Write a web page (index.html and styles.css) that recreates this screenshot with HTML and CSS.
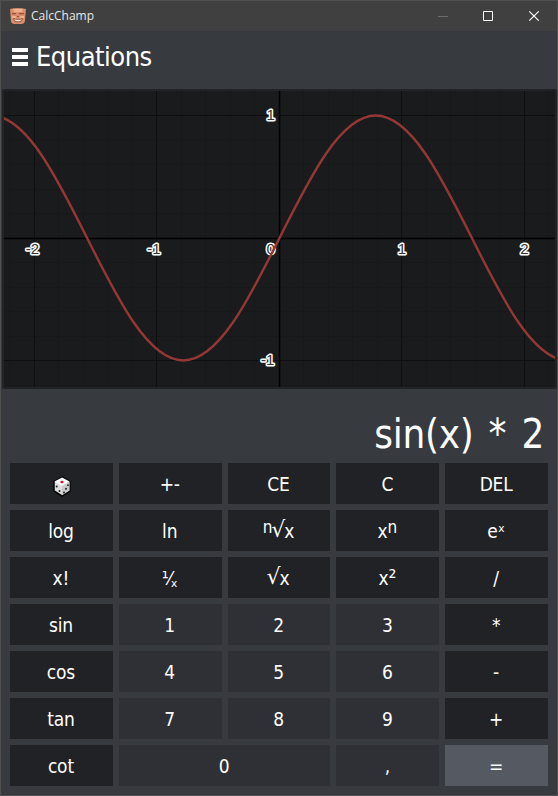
FILE: index.html
```html
<!DOCTYPE html>
<html lang="en">
<head>
<meta charset="utf-8">
<title>CalcChamp</title>
<link rel="stylesheet" href="styles.css">
</head>
<body>
<div class="window">
  <header class="titlebar">
    <svg class="app-icon" width="16" height="16" viewBox="0 0 16 16">
      <path fill="#d98d6c" d="M0 1Q8-1 16 1L15 12Q15 16 11 16H5Q1 16 1 13z"/>
      <path fill="#efb08d" d="M3 1h10l-1 3H4zM2 8h4v2H2zm8 0h4v2h-4z"/>
      <path fill="#94513d" d="M2 5h4v1.300H2zm7 0h5v1.300H9zM7 8h2v1H7zM3 10q5 2 10 0-1 4.500-5 4.500t-5-4.500z"/>
      <path fill="#fbe5d6" d="M4 11.200q4 1 8 0-1 2.300-4 2.300t-4-2.300z"/>
    </svg>
    <span class="app-name">CalcChamp</span>
    <svg class="controls" width="104" height="12" viewBox="0 0 104 12">
      <path d="M0 6.500h10" stroke="#6c6c6c"/>
      <path d="M45.500 1.500h9v9h-9z" stroke="#fff" fill="none"/>
      <path d="M91.300 1.300l9.400 9.400m0-9.400l-9.400 9.400" stroke="#fff" stroke-width="1.200"/>
    </svg>
  </header>
  <div class="heading">
    <div class="menu"><i></i><i></i><i></i></div>
    <h1>Equations</h1>
  </div>
  <div class="graph">
    <svg class="plot" width="551" height="296" viewBox="4 91 551 296">
      <path class="minor" d="M9.500 91v296M58.500 91v296M83.500 91v296M107.500 91v296M132.500 91v296M181.500 91v296M205.500 91v296M230.500 91v296M254.500 91v296M303.500 91v296M328.500 91v296M352.500 91v296M377.500 91v296M426.500 91v296M450.500 91v296M475.500 91v296M499.500 91v296M548.500 91v296M4 140.500h551M4 164.500h551M4 189.500h551M4 213.500h551M4 262.500h551M4 287.500h551M4 311.500h551M4 336.500h551M4 385.500h551"/>
      <path class="major" d="M34.500 91v296M156.500 91v296M401.500 91v296M524.500 91v296M4 115.500h551M4 360.500h551"/>
      <path class="axis" d="M279.600 91v296M4 238.600h551"/>
      <g class="ticks">
        <text x="32.500" y="254.300">-2</text>
        <text x="154" y="254.300">-1</text>
        <text x="270.700" y="254.300">0</text>
        <text x="402" y="254.300">1</text>
        <text x="524.500" y="254.300">2</text>
        <text x="270.700" y="120.300">1</text>
        <text x="267.700" y="365.300">-1</text>
      </g>
      <path class="curve" transform="translate(279.500 238)" d="M-288.600-122.500c34.800 0 64.800 59.700 96.200 122.500c31.400 62.800 61.400 122.500 96.200 122.500c34.800 0 64.800-59.700 96.200-122.500c31.400-62.800 61.400-122.500 96.200-122.500c34.800 0 64.800 59.700 96.200 122.500c31.400 62.800 61.400 122.500 96.200 122.500"/>
    </svg>
  </div>
  <div class="display">sin(x) * 2</div>
  <main class="keys">
    <button class="key"><svg class="die" width="18" height="21" viewBox="0 0 18 21">
      <path d="M9 1l8 4.500v9.500l-8 5-8-5V5.500z" fill="#ddd" stroke="#050505" stroke-width="1.500"/>
      <path d="M9 1.500L16.500 5.500 9 10 1.500 5.500z" fill="#fff"/>
      <path d="M9 10l7.500-4.500v9L9 19.300z" fill="#c9c9c9"/>
      <ellipse cx="9" cy="6" rx="1.700" ry="1.200" fill="#d01b2c"/>
      <g fill="#222"><circle cx="3.700" cy="10.500" r="1"/><circle cx="6.500" cy="15" r="1"/><circle cx="15" cy="9.200" r=".9"/><circle cx="13" cy="12.800" r="1"/><circle cx="11" cy="16.500" r="1"/></g>
    </svg></button>
    <button class="key">+-</button>
    <button class="key">CE</button>
    <button class="key">C</button>
    <button class="key">DEL</button>
    <button class="key">log</button>
    <button class="key">ln</button>
    <button class="key"><span class="power">n</span><span class="root">√</span>x</button>
    <button class="key">x<span class="power">n</span></button>
    <button class="key">eˣ</button>
    <button class="key">x!</button>
    <button class="key">⅟<span class="denominator">ₓ</span></button>
    <button class="key"><span class="root">√</span>x</button>
    <button class="key">x<span class="square">²</span></button>
    <button class="key">/</button>
    <button class="key">sin</button>
    <button class="key num">1</button>
    <button class="key num">2</button>
    <button class="key num">3</button>
    <button class="key">*</button>
    <button class="key">cos</button>
    <button class="key num">4</button>
    <button class="key num">5</button>
    <button class="key num">6</button>
    <button class="key">-</button>
    <button class="key">tan</button>
    <button class="key num">7</button>
    <button class="key num">8</button>
    <button class="key num">9</button>
    <button class="key">+</button>
    <button class="key">cot</button>
    <button class="key num wide">0</button>
    <button class="key num">,</button>
    <button class="key equals">=</button>
  </main>
</div>
</body>
</html>
```
FILE: styles.css
```css
* { box-sizing: border-box; }

body {
  margin: 0;
  background: #373a3f;
  color: #fff;
  font-family: "DejaVu Sans Condensed", "DejaVu Sans", sans-serif;
  font-stretch: condensed;
}

.window {
  width: 558px;
  height: 796px;
  border: 1px solid #505050;
  display: flex;
  flex-direction: column;
}

.titlebar {
  height: 30px;
  flex: none;
  display: flex;
  align-items: center;
  padding: 0 15px 1px 9px;
  background: #404040;
}

.app-name {
  margin-left: 5px;
  color: #e6e6e6;
  font: 12px "Open Sans", sans-serif;
}

.controls { margin-left: auto; }

.heading {
  height: 58px;
  flex: none;
  display: flex;
  padding-left: 11px;
}

.menu {
  width: 16px;
  margin: 17px 8px 0 0;
  display: flex;
  flex-direction: column;
  gap: 3px;
}

.menu i {
  height: 4px;
  background: #fff;
}

h1 {
  margin: 10px 0 0;
  font-size: 27px;
  font-weight: normal;
  line-height: 32px;
  letter-spacing: -0.5px;
}

.graph {
  width: 555px;
  height: 300px;
  flex: none;
  margin-left: 1px;
  padding: 2px 1px;
  border: 0 solid #222326;
  border-width: 0 1px;
  border-radius: 2px;
  background: #222326;
}

.plot {
  display: block;
  background: #1a1b1c;
}

.minor, .major, .axis { fill: none; }
.minor { stroke: #171819; }
.major { stroke: #0e0f10; }
.axis { stroke: #000; stroke-width: 1.5; }

.ticks {
  font: 15px "Liberation Sans", sans-serif;
  text-anchor: middle;
  fill: #333;
  stroke: #fff;
  stroke-width: 3px;
  stroke-linejoin: round;
  paint-order: stroke;
}

.curve {
  fill: none;
  stroke: #943735;
  stroke-width: 2.4;
}

.display {
  height: 74px;
  flex: none;
  padding: 20px 13px 0 0;
  font-size: 40px;
  line-height: 50px;
  letter-spacing: -0.3px;
  word-spacing: 4px;
  text-align: right;
}

.keys {
  display: grid;
  grid-template-columns: repeat(5, 1fr);
  grid-auto-rows: 41px;
  gap: 6px;
  padding: 0 9px;
}

.key {
  display: flex;
  align-items: center;
  justify-content: center;
  min-width: 0;
  padding: 0 1px 0 0;
  border: 0;
  background: #212226;
  color: #fff;
  font: inherit;
  font-size: 19px;
  letter-spacing: -0.2px;
}

.power {
  margin-top: -7px;
  font-size: 17px;
}

.root {
  margin: -2px -1px 0 -1px;
  font-family: "DejaVu Sans", sans-serif;
  font-size: 22px;
  font-stretch: normal;
}

.square {
  font-size: 22px;
}

.denominator {
  margin: 5px 0 0 -1px;
}

.num { background: #2f3035; }
.wide { grid-column: span 2; }
.equals { background: #555962; }
.die { margin: 5px 0 0 3px; }
```
